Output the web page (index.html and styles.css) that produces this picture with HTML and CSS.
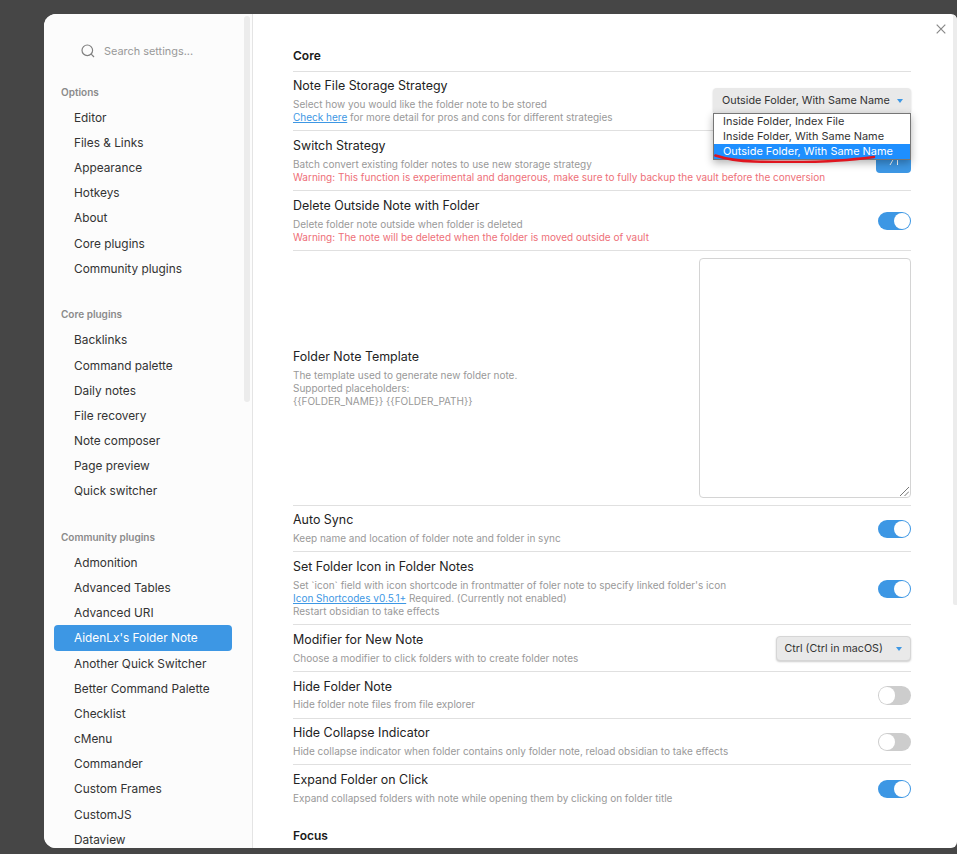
FILE: index.html
```html
<!DOCTYPE html>
<html lang="en">
<head>
<meta charset="utf-8">
<title>Settings</title>
<link rel="stylesheet" href="styles.css">
</head>
<body>
<div class="modal">
  <aside class="sidebar">
    <div class="scroll-thumb side-thumb"></div>
    <div class="search">
      <svg class="search-icon" viewBox="0 0 14 14" width="14" height="14"><circle cx="6.3" cy="6.3" r="5.3"/><path d="M10.2 10.2 13 13"/></svg>
      <span>Search settings...</span>
    </div>
    <div class="group">
      <div class="group-title">Options</div>
      <div class="item">Editor</div>
      <div class="item">Files &amp; Links</div>
      <div class="item">Appearance</div>
      <div class="item">Hotkeys</div>
      <div class="item">About</div>
      <div class="item">Core plugins</div>
      <div class="item">Community plugins</div>
    </div>
    <div class="group">
      <div class="group-title">Core plugins</div>
      <div class="item">Backlinks</div>
      <div class="item">Command palette</div>
      <div class="item">Daily notes</div>
      <div class="item">File recovery</div>
      <div class="item">Note composer</div>
      <div class="item">Page preview</div>
      <div class="item">Quick switcher</div>
    </div>
    <div class="group">
      <div class="group-title">Community plugins</div>
      <div class="item">Admonition</div>
      <div class="item">Advanced Tables</div>
      <div class="item">Advanced URI</div>
      <div class="item active">AidenLx's Folder Note</div>
      <div class="item">Another Quick Switcher</div>
      <div class="item">Better Command Palette</div>
      <div class="item">Checklist</div>
      <div class="item">cMenu</div>
      <div class="item">Commander</div>
      <div class="item">Custom Frames</div>
      <div class="item">CustomJS</div>
      <div class="item">Dataview</div>
    </div>
  </aside>
  <main class="content">
    <div class="scroll-thumb main-thumb"></div>
    <svg class="close" viewBox="0 0 10 10" width="10" height="10"><path d="M.7.7l8.6 8.6M9.3.7.7 9.3"/></svg>
    <h3 class="heading">Core</h3>

    <section class="setting">
      <div class="info">
        <div class="name">Note File Storage Strategy</div>
        <div class="desc">Select how you would like the folder note to be stored<br><a href="#">Check here</a> for more detail for pros and cons for different strategies</div>
      </div>
      <div class="select-wrap">
        <div class="select wide">Outside Folder, With Same Name<i class="caret"></i></div>
        <div class="listbox">
          <div class="option">Inside Folder, Index File</div>
          <div class="option">Inside Folder, With Same Name</div>
          <div class="option selected">Outside Folder, With Same Name</div>
        </div>
        <svg class="scribble" viewBox="0 0 164 10" width="164" height="10"><path d="M1.5 2.5C12 6 24 8 40 8.5 75 9.5 105 9 125 7.5 140 6.5 152 5 160 4"/></svg>
      </div>
    </section>

    <section class="setting">
      <div class="info">
        <div class="name">Switch Strategy</div>
        <div class="desc">Batch convert existing folder notes to use new storage strategy<br><span class="warn">Warning: This function is experimental and dangerous, make sure to fully backup the vault before the conversion</span></div>
      </div>
      <button class="cta"><svg viewBox="0 0 10 10" width="10" height="10"><path d="M1 9 5 2M8.5 2v7"/></svg></button>
    </section>

    <section class="setting">
      <div class="info">
        <div class="name">Delete Outside Note with Folder</div>
        <div class="desc">Delete folder note outside when folder is deleted<br><span class="warn">Warning: The note will be deleted when the folder is moved outside of vault</span></div>
      </div>
      <div class="toggle on"></div>
    </section>

    <section class="setting template">
      <div class="info">
        <div class="name">Folder Note Template</div>
        <div class="desc">The template used to generate new folder note.<br>Supported placeholders:<br>{{FOLDER_NAME}} {{FOLDER_PATH}}</div>
      </div>
      <div class="textarea">
        <svg class="grip" viewBox="0 0 9 9" width="9" height="9"><path d="M0 9 9 0M4.5 9 9 4.5"/></svg>
      </div>
    </section>

    <section class="setting">
      <div class="info">
        <div class="name">Auto Sync</div>
        <div class="desc">Keep name and location of folder note and folder in sync</div>
      </div>
      <div class="toggle on"></div>
    </section>

    <section class="setting">
      <div class="info">
        <div class="name">Set Folder Icon in Folder Notes</div>
        <div class="desc">Set `icon` field with icon shortcode in frontmatter of foler note to specify linked folder's icon<br><a href="#">Icon Shortcodes v0.5.1+</a> Required. (Currently not enabled)<br>Restart obsidian to take effects</div>
      </div>
      <div class="toggle on"></div>
    </section>

    <section class="setting">
      <div class="info">
        <div class="name">Modifier for New Note</div>
        <div class="desc">Choose a modifier to click folders with to create folder notes</div>
      </div>
      <div class="select narrow">Ctrl (Ctrl in macOS)<i class="caret"></i></div>
    </section>

    <section class="setting">
      <div class="info">
        <div class="name">Hide Folder Note</div>
        <div class="desc">Hide folder note files from file explorer</div>
      </div>
      <div class="toggle"></div>
    </section>

    <section class="setting">
      <div class="info">
        <div class="name">Hide Collapse Indicator</div>
        <div class="desc">Hide collapse indicator when folder contains only folder note, reload obsidian to take effects</div>
      </div>
      <div class="toggle"></div>
    </section>

    <section class="setting">
      <div class="info">
        <div class="name">Expand Folder on Click</div>
        <div class="desc">Expand collapsed folders with note while opening them by clicking on folder title</div>
      </div>
      <div class="toggle on"></div>
    </section>

    <h3 class="heading focus">Focus</h3>
  </main>
</div>
</body>
</html>
```
FILE: styles.css
```css
* { box-sizing: border-box; }
html, body { height: 100%; }
body {
  margin: 0;
  padding: 14px 0 6px 44px;
  overflow: hidden;
  background: #464646;
  font-family: Inter, "Liberation Sans", sans-serif;
}
.modal {
  display: flex;
  height: 834px;
  width: 913px;
  background: #fff;
  border-radius: 12px 6px 6px 12px;
  overflow: hidden;
}
.sidebar {
  position: relative;
  flex: 0 0 209px;
  background: #fcfcfc;
  border-right: 1px solid #e4e4e4;
  overflow: hidden;
}
.scroll-thumb {
  position: absolute;
  background: #ececec;
}
.side-thumb { top: 2px; left: 200px; width: 6px; height: 386px; border-radius: 3px; }
.main-thumb { top: 0; right: 0; width: 4px; height: 591px; border-radius: 2px 0 0 2px; }
.search {
  display: flex;
  align-items: center;
  gap: 9px;
  height: 24px;
  margin: 25px 0 0 37px;
  font-size: 10.9px;
  color: #999;
}
.search-icon { fill: none; stroke: #808080; stroke-width: 1.2; }
.group { margin-top: 21.3px; }
.search + .group { margin-top: 16.7px; }
.group-title {
  height: 25.17px;
  line-height: 25.17px;
  padding-left: 17px;
  font-size: 10px;
  font-weight: 600;
  color: #8a8a8a;
}
.item {
  height: 25.17px;
  line-height: 24.17px;
  margin: 0 20px 0 10px;
  padding: 1px 0 0 20px;
  border-radius: 4px;
  font-size: 11.85px;
  color: #333;
  white-space: nowrap;
}
.item.active { background: #3d97e4; color: #fff; }
.content {
  position: relative;
  flex: 1;
  min-width: 0;
  padding: 34px 46px 0 40px;
  overflow: hidden;
}
.close { position: absolute; top: 10px; right: 11px; fill: none; stroke: #888; stroke-width: 1.2; }
.heading {
  margin: 0;
  height: 16px;
  line-height: 16px;
  font-size: 12px;
  font-weight: 600;
  color: #1a1a1a;
}
.focus { margin-top: 16.6px; }
.setting {
  display: flex;
  align-items: center;
  justify-content: space-between;
  gap: 16px;
  padding: 6.7px 0 6.3px;
  border-top: 1px solid #e0e0e0;
}
.heading + .setting { margin-top: 6.6px; }
.template { padding: 7px 0 6.6px; }
.template .info { padding-top: 1px; }
.info { flex: 1; min-width: 0; }
.name {
  height: 16px;
  line-height: 16px;
  margin-bottom: 3.8px;
  font-size: 12.45px;
  color: #222;
}
.desc {
  font-size: 10px;
  line-height: 13px;
  color: #999;
}
.desc a { color: #3d97e4; }
.warn { color: #ee6f78; }
.toggle {
  position: relative;
  flex: none;
  width: 33px;
  height: 18.4px;
  margin-top: 1px;
  border-radius: 10px;
  background: #cdcdcd;
}
.toggle::after {
  content: "";
  position: absolute;
  top: 1px;
  left: 1px;
  width: 16.4px;
  height: 16.4px;
  border-radius: 50%;
  background: #fff;
}
.toggle.on { background: #3d97e4; }
.toggle.on::after { left: auto; right: 1px; }
.select-wrap { position: relative; flex: none; margin-top: -1px; }
.select {
  display: flex;
  align-items: center;
  justify-content: space-between;
  height: 25px;
  padding: 0 8px 0 9px;
  border-radius: 4px;
  background: #e9e9e9;
  box-shadow: 0 1px 2px rgba(0,0,0,.2);
  font-size: 10.8px;
  color: #333;
  white-space: nowrap;
}
.wide { width: 198px; }
.narrow { flex: none; width: 135px; margin-top: 1px; padding-left: 7.5px; border: 1px solid #d6d6d6; font-size: 10.7px; }
.caret {
  width: 0;
  height: 0;
  border-left: 3.5px solid transparent;
  border-right: 3.5px solid transparent;
  border-top: 4px solid #3d97e4;
}
.listbox {
  position: absolute;
  z-index: 2;
  top: 25px;
  left: 0;
  width: 198px;
  height: 47px;
  background: #fff;
  border: 1px solid #767676;
  box-shadow: 0 3px 8px rgba(0,0,0,.3);
  font-size: 10.95px;
  color: #333;
}
.option {
  height: 15px;
  line-height: 15px;
  padding-left: 9px;
  white-space: nowrap;
}
.option.selected { background: #1e8fff; color: #fff; }
.scribble {
  position: absolute;
  z-index: 3;
  top: 65px;
  left: 1px;
  fill: none;
  stroke: #e0151f;
  stroke-width: 2.6;
  stroke-linecap: round;
}
.cta {
  flex: none;
  display: flex;
  align-items: center;
  justify-content: center;
  width: 35px;
  height: 25px;
  padding: 0;
  border: 0;
  border-radius: 4px;
  background: #3d97e4;
}
.cta svg { fill: none; stroke: #fff; stroke-width: 1; }
.textarea {
  position: relative;
  flex: none;
  width: 212px;
  height: 240px;
  border: 1px solid #d4d4d4;
  border-radius: 4px;
  background: #fff;
}
.grip { position: absolute; right: 1px; bottom: 1px; fill: none; stroke: #555; stroke-width: .8; }
```
